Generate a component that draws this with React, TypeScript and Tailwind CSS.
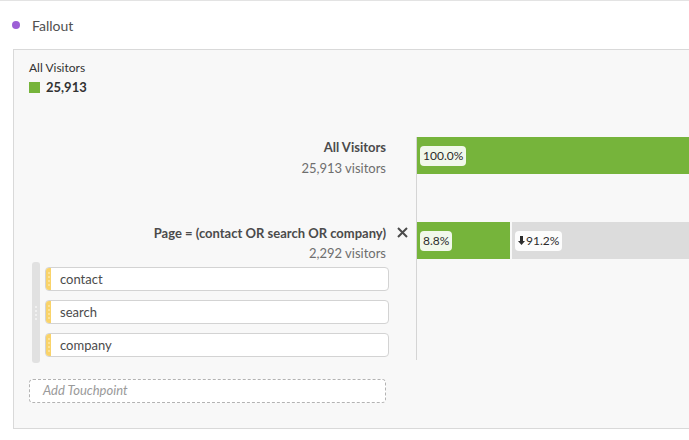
import React from 'react'

const font = { fontFamily: 'Lato, "Noto Sans", sans-serif' }

function DownArrow() {
  return (
    <svg width="7" height="9" viewBox="0 0 7 9" className="mr-[1px] inline-block">
      <path d="M2 0h3v5h2L3.5 9 0 5h2z" fill="#2c2c2c" />
    </svg>
  )
}

function Badge({ children }: { children: React.ReactNode }) {
  return (
    <span className="inline-flex h-[20px] items-center rounded-[4px] bg-white/90 px-[3px] text-[12px] text-[#2c2c2c]">
      {children}
    </span>
  )
}

function Touchpoint({ label }: { label: string }) {
  return (
    <div className="flex h-[24px] overflow-hidden rounded-[4px] border border-[#d3d3d3] bg-white">
      <div className="flex w-[5px] flex-col items-center justify-center gap-[2px] bg-[#f9d36a]">
        <span className="h-[2px] w-[2px] rounded-full bg-[#fde9a8]" />
        <span className="h-[2px] w-[2px] rounded-full bg-[#fde9a8]" />
        <span className="h-[2px] w-[2px] rounded-full bg-[#fde9a8]" />
        <span className="h-[2px] w-[2px] rounded-full bg-[#fde9a8]" />
      </div>
      <span className="pl-[9px] text-[13px] leading-[22px] text-[#4b4b4b]">{label}</span>
    </div>
  )
}

export default function App() {
  return (
    <div style={font} className="h-[440px] w-[689px] overflow-hidden border-t border-[#e3e3e3] bg-white">
      <div className="flex h-[48px] items-center pl-[12px]">
        <span className="h-[8px] w-[8px] rounded-full bg-[#9d5fd6]" />
        <span className="ml-[12px] text-[14px] text-[#505050]">Fallout</span>
      </div>

      <div className="ml-[13px] h-[380px] border-y border-l border-[#d9d9d9] bg-[#f8f8f8]">
        <div className="pl-[15px] pt-[10px]">
          <div className="text-[12px] leading-[16px] text-[#323232]">All Visitors</div>
          <div className="mt-[2px] flex items-center gap-[6px]">
            <span className="h-[11px] w-[11px] bg-[#76b43b]" />
            <span className="text-[13px] font-bold leading-[18px] text-[#323232]">25,913</span>
          </div>
        </div>

        <div className="mt-[41px]">
          <div className="flex h-[85px]">
            <div className="w-[402px] pr-[30px] text-right">
              <div className="text-[13px] font-bold leading-[20px] text-[#4b4b4b]">All Visitors</div>
              <div className="text-[13px] leading-[22px] text-[#6e6e6e]">25,913 visitors</div>
            </div>
            <div className="flex-1 border-l border-[#d5d5d5]">
              <div className="flex h-[37px] items-center bg-[#76b43b] pl-[3px]">
                <Badge>100.0%</Badge>
              </div>
            </div>
          </div>

          <div className="flex h-[138px]">
            <div className="w-[402px]">
              <div className="flex items-start justify-end">
                <div className="text-right">
                  <div className="text-[13px] font-bold leading-[22px] text-[#4b4b4b]">
                    Page = (contact OR search OR company)
                  </div>
                  <div className="text-[13px] leading-[18px] text-[#6e6e6e]">2,292 visitors</div>
                </div>
                <svg width="30" height="22" viewBox="0 0 30 22">
                  <path d="M12 6l9 9M21 6l-9 9" stroke="#4b4b4b" strokeWidth="2" />
                </svg>
              </div>
              <div className="ml-[18px] mr-[27px] flex">
                <div className="flex w-[8px] flex-col items-center justify-center gap-[2px] rounded-[3px] bg-[#e1e1e1]">
                  <span className="h-[2px] w-[2px] rounded-full bg-[#f4f4f4]" />
                  <span className="h-[2px] w-[2px] rounded-full bg-[#f4f4f4]" />
                  <span className="h-[2px] w-[2px] rounded-full bg-[#f4f4f4]" />
                  <span className="h-[2px] w-[2px] rounded-full bg-[#f4f4f4]" />
                </div>
                <div className="flex flex-1 flex-col gap-[9px] pb-[6px] pl-[5px] pt-[5px]">
                  <Touchpoint label="contact" />
                  <Touchpoint label="search" />
                  <Touchpoint label="company" />
                </div>
              </div>
            </div>
            <div className="flex-1 border-l border-[#d5d5d5]">
              <div className="flex h-[37px]">
                <div className="flex w-[93px] items-center bg-[#76b43b] pl-[3px]">
                  <Badge>8.8%</Badge>
                </div>
                <div className="ml-[2px] flex flex-1 items-center bg-[#dcdcdc] pl-[3px]">
                  <Badge>
                    <DownArrow />
                    91.2%
                  </Badge>
                </div>
              </div>
            </div>
          </div>

          <div className="ml-[15px] mt-[19px] flex h-[24px] w-[357px] items-center rounded-[4px] border border-dashed border-[#b3b3b3] bg-white pl-[13px]">
            <span className="text-[13px] italic text-[#9a9a9a]">Add Touchpoint</span>
          </div>
        </div>
      </div>
    </div>
  )
}
